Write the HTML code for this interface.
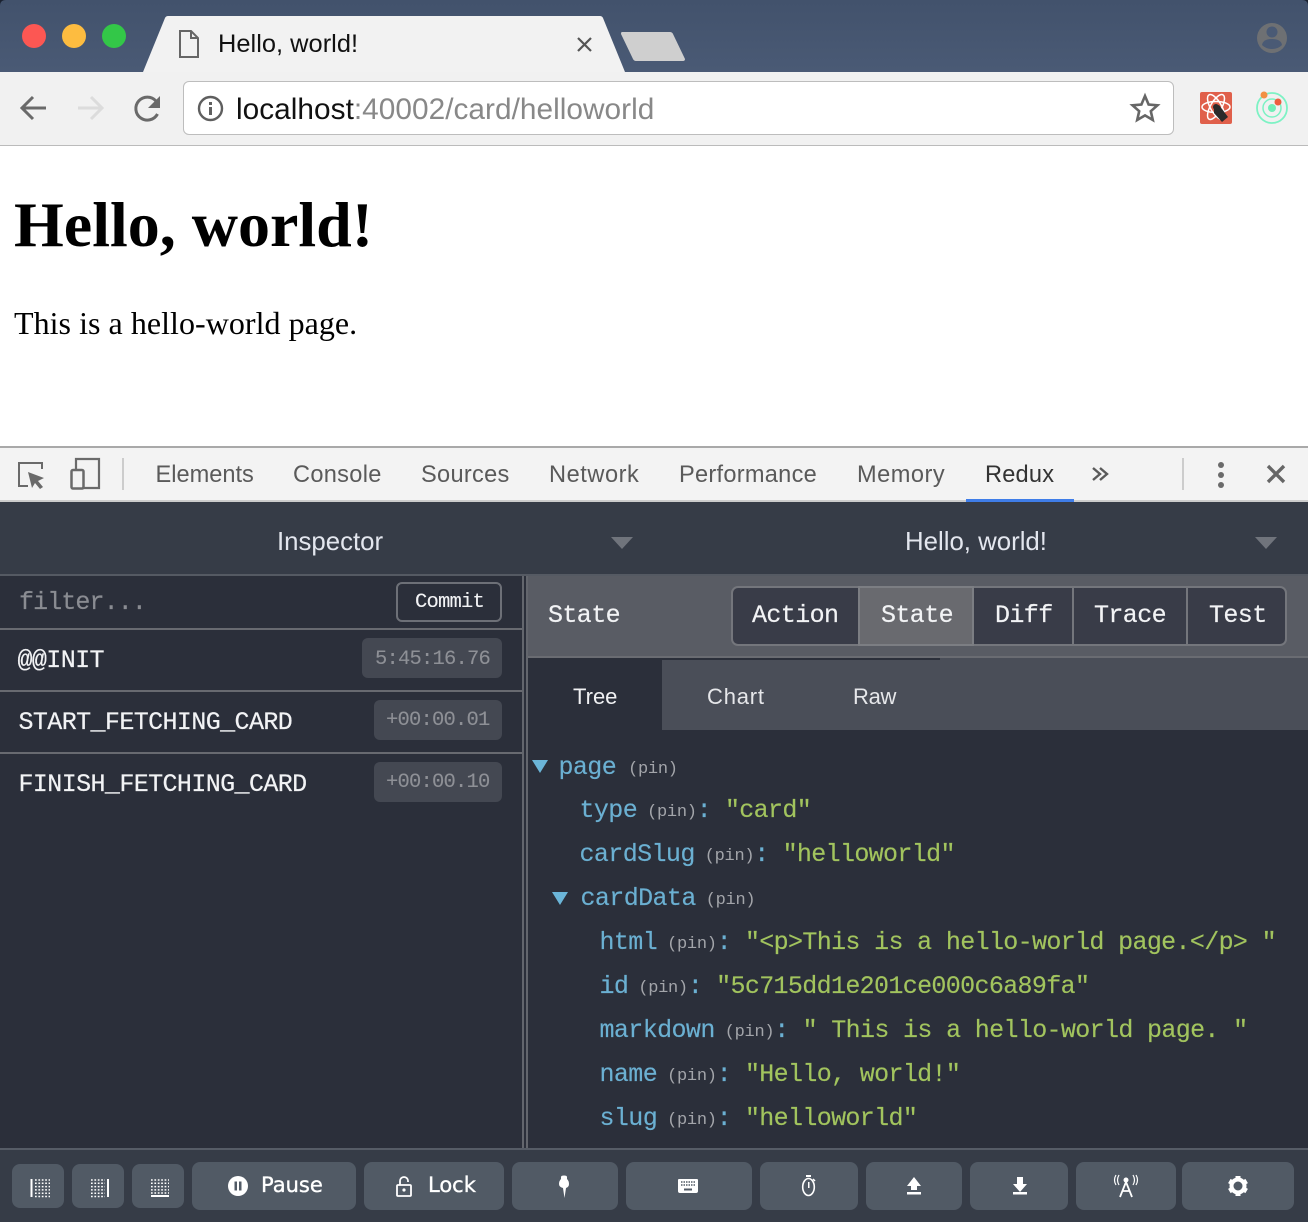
<!DOCTYPE html>
<html><head><meta charset="utf-8"><title>Hello, world!</title>
<style>
html,body{margin:0;padding:0;background:#fff}
#p{position:relative;width:1308px;height:1222px;overflow:hidden;background:#fff;font-family:"Liberation Sans",sans-serif}
.b{position:absolute;box-sizing:border-box}
.t{position:absolute;white-space:pre;line-height:44px}
.m{font-family:"Liberation Mono",monospace;font-size:25px;letter-spacing:-.6px;color:#f2f3f5;-webkit-text-stroke:.2px currentColor}
.sm{font-size:20.5px;letter-spacing:-.8px;-webkit-text-stroke:.1px currentColor}
.dt{font-size:23.6px;color:#5a5a5a;top:453px}
.k{color:#6bb0d2}.s{color:#a2c45e;letter-spacing:-.65px;margin-left:-.5px}
.pn{color:#a3a5aa;font-size:17px;letter-spacing:-.3px;margin-left:10px;-webkit-text-stroke:0;position:relative;top:-1px}
.tr{font-family:"Liberation Mono",monospace;font-size:25px;letter-spacing:-.6px;-webkit-text-stroke:.15px currentColor}
.g{position:absolute;background:#515a65;border-radius:8px}
svg{position:absolute;overflow:visible}
</style></head><body><div id="p">

<div class="b" style="left:0;top:0;width:1308px;height:72px;background:linear-gradient(#42526c,#4a5a75)"></div>
<svg style="left:0;top:0" width="1308" height="146">
<path d="M1302 0H1308V6Q1308 0 1302 0ZM6 0H0V6Q0 0 6 0Z" fill="#1b2230"/>
<circle cx="34" cy="36" r="12" fill="#fc5753"/><circle cx="74" cy="36" r="12" fill="#fdbc40"/><circle cx="114" cy="36" r="12" fill="#33c748"/>
<path d="M143 72L165 18Q166 16 168 16H600Q602 16 603 18L625 72Z" fill="#f2f2f2"/>
<path d="M622 32H670Q672 32 673 34L685 59Q685 61 683 61H636Q634 61 633 59L621 34Q621 32 622 32Z" fill="#cfcfcf"/>
<path d="M180 31H191L198 38V57H180Z M191 31V38H198" fill="none" stroke="#666" stroke-width="2"/>
<path d="M578 38L591 51M591 38L578 51" stroke="#555" stroke-width="2.2"/>
<circle cx="1272" cy="38" r="15" fill="#6e7073"/><circle cx="1272" cy="32" r="5.5" fill="#4a5a75"/><path d="M1262 45Q1263 39 1272 39Q1281 39 1282 45Q1278 49 1272 49Q1266 49 1262 45Z" fill="#4a5a75"/>
</svg>

<div class="b" style="left:0;top:72px;width:1308px;height:74px;background:#f1f1f1;border-bottom:1px solid #bbb"></div>
<div class="b" style="left:183px;top:81px;width:991px;height:54px;background:#fff;border:1px solid #bdbdbd;border-radius:6px"></div>
<svg style="left:0;top:0" width="1308" height="146">
<path d="M46 108H22M33 97L22 108L33 119" fill="none" stroke="#6a6a6a" stroke-width="3"/>
<path d="M78 108H102M91 97L102 108L91 119" fill="none" stroke="#dcdcdc" stroke-width="3"/>
<path d="M157.500 114A11.500 11.500 0 1 1 156 101" fill="none" stroke="#6a6a6a" stroke-width="3"/><path d="M160 96V108H148Z" fill="#6a6a6a"/>
<circle cx="210.500" cy="108.500" r="11.500" fill="none" stroke="#5f5f5f" stroke-width="2.400"/><rect x="209" y="107" width="3" height="8" fill="#5f5f5f"/><rect x="209" y="102" width="3" height="3" fill="#5f5f5f"/>
<path d="M1145 96L1148.600 104.500L1157.500 105.300L1150.800 111.200L1152.800 120L1145 115.400L1137.200 120L1139.200 111.200L1132.500 105.300L1141.400 104.500Z" fill="none" stroke="#666" stroke-width="2.600"/>
<rect x="1200" y="92" width="32" height="32" rx="2" fill="#e0604b"/>
<g fill="none" stroke="#fff" stroke-width="1.500"><ellipse cx="1216" cy="107" rx="14" ry="5.500"/><ellipse cx="1216" cy="107" rx="14" ry="5.500" transform="rotate(60 1216 107)"/><ellipse cx="1216" cy="107" rx="14" ry="5.500" transform="rotate(-60 1216 107)"/></g>
<path d="M1214 108L1219 105L1228 117L1222 122L1214 113Z" fill="#2b2b2b"/><circle cx="1216" cy="107" r="3" fill="#2b2b2b"/>
<circle cx="1272" cy="108" r="15" fill="none" stroke="#7df2c4" stroke-width="1.800"/><circle cx="1272" cy="108" r="9" fill="none" stroke="#7df2c4" stroke-width="1.500"/><circle cx="1272" cy="108" r="4" fill="#71eeb8"/><circle cx="1264" cy="95" r="3.500" fill="#f29044"/><circle cx="1278" cy="102" r="3.500" fill="#ed5c3f"/>
</svg>
<div class="t" style="left:218px;top:22px;font-size:25.400px;color:#111;letter-spacing:.03px">Hello, world!</div>
<div class="t" style="left:236px;top:88px;font-size:29.800px;color:#888;letter-spacing:.03px"><span style="color:#111">localhost</span>:40002/card/helloworld</div>

<div class="t" style="left:14px;top:195px;font:bold 64px/60px 'Liberation Serif',serif;color:#000">Hello, world!</div>
<div class="t" style="left:14px;top:303px;font:32px/40px 'Liberation Serif',serif;color:#000;letter-spacing:.04px">This is a hello-world page.</div>

<div class="b" style="left:0;top:446px;width:1308px;height:56px;background:#f3f3f3;border-top:2px solid #a9a9a9;border-bottom:2px solid #ccc"></div>
<div class="b" style="left:966px;top:499px;width:108px;height:3px;background:#3f7de8"></div>
<svg style="left:0;top:445px" width="1308" height="60">
<path d="M42 24V18H19V41H28" fill="none" stroke="#6a6a6a" stroke-width="2"/>
<path d="M28 27L44 33L38 36L43 42L40 44L35 38L32 43Z" fill="#6a6a6a"/>
<path d="M76 24V14H99V43H82" fill="none" stroke="#6a6a6a" stroke-width="2.200"/>
<rect x="71.500" y="25" width="12" height="18.500" rx="1.500" fill="none" stroke="#6a6a6a" stroke-width="2.500"/>
<rect x="122" y="13" width="2" height="32" fill="#ccc"/><rect x="1182" y="13" width="2" height="32" fill="#ccc"/>
<path d="M1093 23L1100 29L1093 35M1100 23L1107 29L1100 35" fill="none" stroke="#5a5a5a" stroke-width="2.400"/>
<circle cx="1221" cy="20" r="3" fill="#6a6a6a"/><circle cx="1221" cy="30" r="3" fill="#6a6a6a"/><circle cx="1221" cy="40" r="3" fill="#6a6a6a"/>
<path d="M1268 21L1284 37M1284 21L1268 37" stroke="#666" stroke-width="3.400"/>
</svg>
<div class="t dt" style="left:155.500px">Elements</div>
<div class="t dt" style="left:293px;letter-spacing:.3px">Console</div>
<div class="t dt" style="left:421px;letter-spacing:.3px">Sources</div>
<div class="t dt" style="left:549px;letter-spacing:.55px">Network</div>
<div class="t dt" style="left:679px;letter-spacing:.27px">Performance</div>
<div class="t dt" style="left:857px;letter-spacing:.5px">Memory</div>
<div class="t dt" style="left:985px;color:#333;letter-spacing:.2px">Redux</div>

<div class="b" style="left:0;top:502px;width:1308px;height:720px;background:#2b2f3a"></div>
<div class="b" style="left:0;top:502px;width:1308px;height:72px;background:#363c47"></div>
<div class="b" style="left:0;top:574px;width:1308px;height:2px;background:#555a63"></div>
<div class="t" style="left:277px;top:520px;font-size:25.800px;color:#e3e6ee">Inspector</div>
<div class="t" style="left:905px;top:520px;font-size:25.800px;color:#e3e6ee">Hello, world!</div>
<svg style="left:0;top:0" width="1308" height="600"><path d="M611 537H633L622 549Z M1255 537H1277L1266 549Z" fill="#70747c"/></svg>

<div class="b" style="left:522px;top:576px;width:2px;height:574px;background:#63666d"></div>
<div class="b" style="left:526px;top:576px;width:2px;height:574px;background:#63666d"></div>
<div class="b" style="left:0;top:628px;width:522px;height:2px;background:#686a70"></div>
<div class="b" style="left:0;top:690px;width:522px;height:2px;background:#686a70"></div>
<div class="b" style="left:0;top:752px;width:522px;height:2px;background:#686a70"></div>
<div class="t m" style="left:19px;top:581px;color:#8a8c92;letter-spacing:-.9px;">filter...</div>
<div class="b" style="left:396px;top:582px;width:106px;height:40px;border:2px solid #6d7077;border-radius:6px"></div>
<div class="t m sm" style="left:415px;top:581px">Commit</div>
<div class="t m" style="left:17.500px;top:639px">@@INIT</div>
<div class="t m" style="left:18.500px;top:701px">START_FETCHING_CARD</div>
<div class="t m" style="left:18.500px;top:763px">FINISH_FETCHING_CARD</div>
<div class="b" style="left:362px;top:638px;width:140px;height:40px;background:#444852;border-radius:6px"></div>
<div class="b" style="left:374px;top:700px;width:128px;height:40px;background:#444852;border-radius:6px"></div>
<div class="b" style="left:374px;top:762px;width:128px;height:40px;background:#444852;border-radius:6px"></div>
<div class="t m sm" style="left:375px;top:638px;color:#8e9096">5:45:16.76</div>
<div class="t m sm" style="left:386px;top:699px;color:#8e9096">+00:00.01</div>
<div class="t m sm" style="left:386px;top:761px;color:#8e9096">+00:00.10</div>

<div class="b" style="left:528px;top:576px;width:780px;height:80px;background:#595c64"></div>
<div class="b" style="left:528px;top:656px;width:780px;height:2px;background:#6a6c72"></div>
<div class="b" style="left:662px;top:660px;width:646px;height:70px;background:#4a4e58"></div>
<div class="b" style="left:940px;top:658px;width:368px;height:2px;background:#4a4e58"></div>
<div class="b" style="left:731px;top:586px;width:556px;height:60px;background:#393c48;border:2px solid #74767c;border-radius:7px"></div>
<div class="b" style="left:858px;top:586px;width:116px;height:60px;background:#696a6f;border:2px solid #7c7e83"></div>
<div class="b" style="left:1072px;top:588px;width:2px;height:56px;background:#74767c"></div>
<div class="b" style="left:1186px;top:588px;width:2px;height:56px;background:#74767c"></div>
<div class="t m" style="left:548px;top:594px">State</div>
<div class="t m" style="left:752px;top:594px">Action</div>
<div class="t m" style="left:881px;top:594px">State</div>
<div class="t m" style="left:995px;top:594px">Diff</div>
<div class="t m" style="left:1094px;top:594px">Trace</div>
<div class="t m" style="left:1209px;top:594px">Test</div>
<div class="t" style="left:573px;top:675px;font-size:22px;color:#f0f1f3">Tree</div>
<div class="t" style="left:707px;top:675px;font-size:22px;color:#e6e7ea;letter-spacing:.8px">Chart</div>
<div class="t" style="left:853px;top:675px;font-size:22px;color:#e6e7ea;letter-spacing:-.3px">Raw</div>

<svg style="left:0;top:0" width="1308" height="920"><path d="M532 760H548L540 773Z M552 892H568L560 905Z" fill="#6bb5d8"/></svg>
<div class="t tr" style="left:558.500px;top:746px"><span class="k">page</span><span class="pn" style="margin-left:12px">(pin)</span></div>
<div class="t tr" style="left:579.500px;top:789px"><span class="k">type</span><span class="pn">(pin)</span><span class="k">:</span> <span class="s">"card"</span></div>
<div class="t tr" style="left:579.500px;top:833px"><span class="k">cardSlug</span><span class="pn">(pin)</span><span class="k">:</span> <span class="s">"helloworld"</span></div>
<div class="t tr" style="left:580.500px;top:877px"><span class="k">cardData</span><span class="pn">(pin)</span></div>
<div class="t tr" style="left:599.500px;top:921px"><span class="k">html</span><span class="pn">(pin)</span><span class="k">:</span> <span class="s">"&lt;p&gt;This is a hello-world page.&lt;/p&gt; "</span></div>
<div class="t tr" style="left:599.500px;top:965px"><span class="k">id</span><span class="pn">(pin)</span><span class="k">:</span> <span class="s">"5c715dd1e201ce000c6a89fa"</span></div>
<div class="t tr" style="left:599.500px;top:1009px"><span class="k">markdown</span><span class="pn">(pin)</span><span class="k">:</span> <span class="s">" This is a hello-world page. "</span></div>
<div class="t tr" style="left:599.500px;top:1053px"><span class="k">name</span><span class="pn">(pin)</span><span class="k">:</span> <span class="s">"Hello, world!"</span></div>
<div class="t tr" style="left:599.500px;top:1097px"><span class="k">slug</span><span class="pn">(pin)</span><span class="k">:</span> <span class="s">"helloworld"</span></div>

<div class="b" style="left:0;top:1148px;width:1308px;height:74px;background:#363c47;border-top:2px solid #565c66"></div>
<div class="g" style="left:12px;top:1164px;width:52px;height:44px"></div>
<div class="g" style="left:72px;top:1164px;width:52px;height:44px"></div>
<div class="g" style="left:132px;top:1164px;width:52px;height:44px"></div>
<div class="g" style="left:192px;top:1162px;width:164px;height:48px"></div>
<div class="g" style="left:364px;top:1162px;width:140px;height:48px"></div>
<div class="g" style="left:512px;top:1162px;width:106px;height:48px"></div>
<div class="g" style="left:626px;top:1162px;width:126px;height:48px"></div>
<div class="g" style="left:760px;top:1162px;width:98px;height:48px"></div>
<div class="g" style="left:866px;top:1162px;width:96px;height:48px"></div>
<div class="g" style="left:970px;top:1162px;width:98px;height:48px"></div>
<div class="g" style="left:1076px;top:1162px;width:100px;height:48px"></div>
<div class="g" style="left:1182px;top:1162px;width:112px;height:48px"></div>
<div class="t" style="left:261px;top:1163px;font-family:'DejaVu Sans',sans-serif;font-size:21px;color:#fff;-webkit-text-stroke:.35px #fff">Pause</div>
<div class="t" style="left:428px;top:1163px;font-family:'DejaVu Sans',sans-serif;font-size:21px;color:#fff;-webkit-text-stroke:.35px #fff">Lock</div>
<svg style="left:0;top:1140px" width="1308" height="82">
<g fill="none" stroke="#fff">
<path d="M31.500 39V57" stroke-width="2"/><path d="M35 40H50M35 43.300H50M35 46.600H50M35 49.900H50M35 53.200H50M35 56.500H50" stroke-width="1.500" stroke-dasharray="1.700 1.700"/>
<path d="M108 39V57" stroke-width="2"/><path d="M91 40H105M91 43.300H105M91 46.600H105M91 49.900H105M91 53.200H105M91 56.500H105" stroke-width="1.500" stroke-dasharray="1.700 1.700"/>
<path d="M151 56H169" stroke-width="2"/><path d="M151 40H169M151 43.300H169M151 46.600H169M151 49.900H169M151 53H169" stroke-width="1.500" stroke-dasharray="1.700 1.700"/>
</g>
<circle cx="238" cy="46" r="10" fill="#fff"/><rect x="234.500" y="41.500" width="2.500" height="9" fill="#515a65"/><rect x="239" y="41.500" width="2.500" height="9" fill="#515a65"/>
<rect x="397" y="45" width="14" height="11" rx="1" fill="none" stroke="#fff" stroke-width="1.800"/><path d="M400 45V41A4 4 0 0 1 408 41V42" fill="none" stroke="#fff" stroke-width="1.800"/><circle cx="404" cy="50" r="1.600" fill="#fff"/>
<path d="M561 37Q561 35.500 564 35.500Q567 35.500 567 37V39Q569 41 569 44Q569 47 566 48L564.500 58L563 48Q559 47 559 44Q559 41 561 39Z" fill="#fff"/>
<path d="M679 39H697Q698 39 698 40V51Q698 53 696 53H680Q678 53 678 51V40Q678 39 679 39Z" fill="#fff"/><path d="M681 42H695M681 45H695" stroke="#515a65" stroke-width="1.500" stroke-dasharray="1.500 1"/><rect x="684" y="48.500" width="8" height="2" fill="#515a65"/>
<ellipse cx="808.500" cy="47" rx="5.800" ry="8.500" fill="none" stroke="#fff" stroke-width="1.600"/><rect x="806" y="35" width="5" height="2" fill="#fff"/><rect x="808" y="42" width="1.500" height="6" fill="#fff"/><path d="M813 39L815 41" stroke="#fff" stroke-width="1.500"/>
<path d="M914 37L921 46H917V50H911V46H907Z" fill="#fff"/><rect x="907" y="52" width="14" height="2.500" fill="#fff"/>
<path d="M1017 37H1023V44H1027L1020 52L1013 44H1017Z" fill="#fff"/><rect x="1013" y="52" width="14" height="2.500" fill="#fff"/>
<circle cx="1126" cy="40" r="2.500" fill="#fff"/><path d="M1126 42L1120 57M1126 42L1132 57M1122 51H1130" stroke="#fff" stroke-width="1.800" fill="none"/><path d="M1119 35Q1116 40 1119 45M1133 35Q1136 40 1133 45M1116 35Q1113 40 1116 45M1136 35Q1139 40 1136 45" stroke="#fff" stroke-width="1.200" fill="none"/>
<g transform="translate(1238,46)"><circle r="6.500" fill="none" stroke="#fff" stroke-width="4"/><path d="M-2.500 -10H2.500V-7H-2.500ZM-2.500 10H2.500V7H-2.500Z" fill="#fff"/><path d="M-2.500 -10H2.500V-7H-2.500ZM-2.500 10H2.500V7H-2.500Z" fill="#fff" transform="rotate(60)"/><path d="M-2.500 -10H2.500V-7H-2.500ZM-2.500 10H2.500V7H-2.500Z" fill="#fff" transform="rotate(120)"/></g>
</svg>
</div></body></html>
